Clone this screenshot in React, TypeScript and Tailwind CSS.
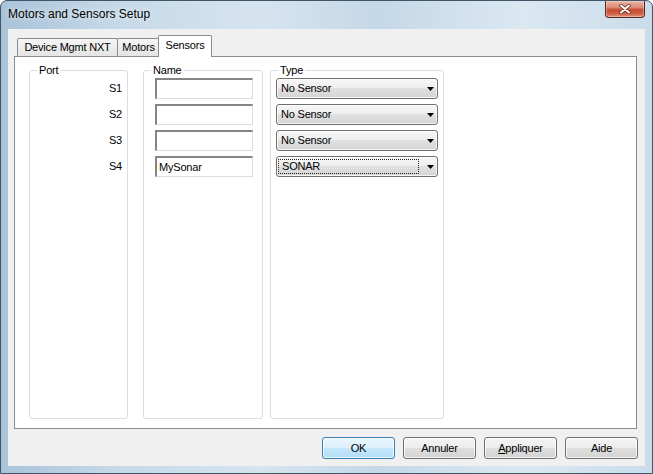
import React from "react";

function CloseButton() {
  return (
    <div className="w-[40px] h-[17px] rounded-b-[4px] border border-t-0 border-[#5b2a22] bg-[linear-gradient(180deg,#ebb5a6_0%,#dc8a75_40%,#c84a32_55%,#d06247_80%,#e49377_100%)] flex items-center justify-center shadow-[inset_0_0_0_1px_rgba(255,255,255,0.3)]">
      <svg width="12" height="10" viewBox="0 0 12 10">
        <path d="M2 1.5 L10 8.5 M10 1.5 L2 8.5" stroke="#5a2418" strokeWidth="3.4" strokeLinecap="round" />
        <path d="M2 1.5 L10 8.5 M10 1.5 L2 8.5" stroke="#ffffff" strokeWidth="2" strokeLinecap="round" />
      </svg>
    </div>
  );
}

function Arrow() {
  return (
    <svg width="7" height="4" viewBox="0 0 7 4" className="shrink-0">
      <path d="M0 0H7L3.5 4Z" fill="#000" />
    </svg>
  );
}

function Select({ value, focused }: { value: string; focused?: boolean }) {
  return (
    <div className="w-[162px] h-[21px] rounded-[3px] border border-[#707070] bg-[linear-gradient(180deg,#f7f7f7_0%,#ededed_50%,#e0e0e0_50%,#d4d4d4_100%)] shadow-[inset_0_0_0_1px_rgba(255,255,255,0.75)] flex items-center pr-[3px]">
      {focused ? (
        <div className="ml-[1px] w-[141px] h-[15px] border border-dotted border-[#222] flex items-center pl-[3px]">
          {value}
        </div>
      ) : (
        <div className="pl-[4px]">{value}</div>
      )}
      <div className="flex-1" />
      <Arrow />
    </div>
  );
}

function NameInput({ value }: { value?: string }) {
  return (
    <div className="w-[98px] h-[21px] bg-white border-t-2 border-l-2 border-r border-b border-t-[#858585] border-l-[#858585] border-r-[#dcdcdc] border-b-[#dcdcdc] flex items-center pl-[2px]">
      {value}
    </div>
  );
}

function Btn({ children, def }: { children: React.ReactNode; def?: boolean }) {
  return (
    <div
      className={
        def
          ? "w-[73px] h-[22px] rounded-[3px] border border-[#3c7fb1] bg-[linear-gradient(180deg,#eaf6fd_0%,#dcf0fc_50%,#c6e7fb_50%,#b4def8_100%)] shadow-[inset_0_0_0_1px_rgba(255,255,255,0.7)] flex items-center justify-center"
          : "w-[73px] h-[22px] rounded-[3px] border border-[#707070] bg-[linear-gradient(180deg,#f4f4f4_0%,#ececec_50%,#dfdfdf_50%,#d3d3d3_100%)] shadow-[inset_0_0_0_1px_rgba(255,255,255,0.75)] flex items-center justify-center"
      }
    >
      {children}
    </div>
  );
}

export default function App() {
  const ports = ["S1", "S2", "S3", "S4"];
  return (
    <div className="w-[653px] h-[474px] overflow-hidden flex flex-col border border-[#3f5668] rounded-t-[7px] bg-[linear-gradient(90deg,#a9c3d9_0%,#c6d9e8_18%,#d6e4ef_40%,#c5d8e7_58%,#dbe8f2_80%,#cadcea_100%)] font-['Liberation_Sans',Arial,sans-serif] text-[11px] text-black">
      {/* title bar */}
      <div className="h-[28px] shrink-0 flex items-start justify-between pl-[7px] pr-[7px]">
        <span className="mt-[6px] text-[12px] leading-[15px] [text-shadow:0_0_6px_#ffffff]">
          Motors and Sensors Setup
        </span>
        <CloseButton />
      </div>

      {/* client area */}
      <div className="mx-[7px] h-[437px] shrink-0 bg-[#f0f0f0] flex flex-col pt-[6px] tracking-[-0.2px]">
        <div className="ml-[6px] w-[623px] flex flex-col">
          {/* tabs */}
          <div className="relative z-10 flex items-end h-[21px] pl-[3px]">
            <div className="h-[18px] w-[101px] border border-b-0 border-[#898c95] rounded-t-[2px] bg-[linear-gradient(180deg,#f5f5f5,#e4e4e4)] flex items-center justify-center leading-[13px]">
              Device Mgmt NXT
            </div>
            <div className="-ml-px h-[18px] w-[43px] border border-b-0 border-[#898c95] rounded-t-[2px] bg-[linear-gradient(180deg,#f5f5f5,#e4e4e4)] flex items-center justify-center leading-[13px]">
              Motors
            </div>
            <div className="-ml-[2px] -mb-px h-[22px] w-[54px] border border-b-0 border-[#898c95] rounded-t-[2px] bg-white flex justify-center pt-[3px] leading-[13px]">
              Sensors
            </div>
          </div>

          {/* page */}
          <div className="h-[373px] border border-[#898c95] bg-white flex pt-[7px] pb-[9px] pl-[14px]">
            <fieldset className="w-[99px] border border-[#d5dfe5] rounded-[3px] p-0 m-0">
              <legend className="ml-[7px] px-[2px] leading-[13px]">Port</legend>
              <div className="flex flex-col items-end pr-[5px] pt-[1px] gap-[5px]">
                {ports.map((p) => (
                  <div key={p} className="h-[21px] flex items-center">
                    {p}
                  </div>
                ))}
              </div>
            </fieldset>

            <fieldset className="ml-[15px] w-[120px] border border-[#d5dfe5] rounded-[3px] p-0 m-0">
              <legend className="ml-[7px] px-[2px] leading-[13px]">Name</legend>
              <div className="flex flex-col pl-[11px] pt-[1px] gap-[5px]">
                <NameInput />
                <NameInput />
                <NameInput />
                <NameInput value="MySonar" />
              </div>
            </fieldset>

            <fieldset className="ml-[7px] w-[174px] border border-[#d5dfe5] rounded-[3px] p-0 m-0">
              <legend className="ml-[7px] px-[2px] leading-[13px]">Type</legend>
              <div className="flex flex-col pl-[5px] pt-[1px] gap-[5px]">
                <Select value="No Sensor" />
                <Select value="No Sensor" />
                <Select value="No Sensor" />
                <Select value="SONAR" focused />
              </div>
            </fieldset>
          </div>
        </div>

        {/* buttons */}
        <div className="mt-[8px] flex justify-end gap-[8px] pr-[7px]">
          <Btn def>OK</Btn>
          <Btn>Annuler</Btn>
          <Btn>
            <span>
              <span className="underline underline-offset-[1px]">A</span>ppliquer
            </span>
          </Btn>
          <Btn>Aide</Btn>
        </div>
      </div>
    </div>
  );
}
